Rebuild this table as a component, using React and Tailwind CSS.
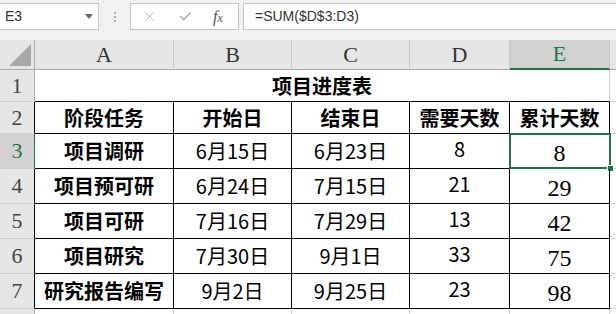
import { X, Check } from 'lucide-react';

const cols = ['A', 'B', 'C', 'D', 'E'];

const rows = [
  { n: 3, task: '项目调研', start: '6月15日', end: '6月23日', days: '8', total: '8' },
  { n: 4, task: '项目预可研', start: '6月24日', end: '7月15日', days: '21', total: '29' },
  { n: 5, task: '项目可研', start: '7月16日', end: '7月29日', days: '13', total: '42' },
  { n: 6, task: '项目研究', start: '7月30日', end: '9月1日', days: '33', total: '75' },
  { n: 7, task: '研究报告编写', start: '9月2日', end: '9月25日', days: '23', total: '98' },
];

const cjk = "font-['Noto_Sans_CJK_SC','Microsoft_YaHei',sans-serif]";
const serif = "font-['Liberation_Serif','Times_New_Roman',serif]";

function RowHead({ n, active, edge = 'border-r-black' }) {
  return (
    <div
      className={`flex items-center justify-center border-b border-r border-b-[#d0d0d0] ${serif} text-[22px] leading-none ${
        active ? 'bg-[#d2d2d2] text-[#217346] border-r-[#217346]' : `bg-[#e6e6e6] text-[#444] ${edge}`
      }`}
    >
      {n}
    </div>
  );
}

function Cell({ children, className = '' }) {
  return (
    <div className={`flex items-center justify-center border-b border-r border-black ${className}`}>
      {children}
    </div>
  );
}

export default function App() {
  return (
    <div className="w-[616px] h-[314px] overflow-hidden bg-[#f1f1f1] text-black">
      {/* formula bar */}
      <div className="flex items-start h-[40px] pt-[3px] font-['Liberation_Sans','Segoe_UI',sans-serif] text-[14px] text-[#333]">
        <div className="w-[99px] h-[27px] bg-white border border-[#c6c6c6] border-l-0 flex items-center justify-between pl-[5px] pr-[5px]">
          <span>E3</span>
          <span className="w-0 h-0 border-l-[4px] border-r-[4px] border-t-[5px] border-l-transparent border-r-transparent border-t-[#666]" />
        </div>
        <div className="w-[31px] h-[27px] flex flex-col items-center justify-center gap-[2px]">
          <span className="w-[2px] h-[2px] bg-[#aaa]" />
          <span className="w-[2px] h-[2px] bg-[#aaa]" />
          <span className="w-[2px] h-[2px] bg-[#aaa]" />
        </div>
        <div className="w-[109px] h-[27px] bg-white border border-[#c6c6c6] flex items-center">
          <X className="ml-[11px] w-[15px] h-[15px] text-[#b3b3b3]" strokeWidth={1.5} />
          <Check className="ml-[21px] w-[15px] h-[15px] text-[#b3b3b3]" strokeWidth={2.5} />
          <span className={`ml-[20px] ${serif} italic text-[16px] text-[#555]`}>
            f<span className="text-[12px]">x</span>
          </span>
        </div>
        <div className="ml-[4px] flex-1 h-[27px] bg-white border border-[#c6c6c6] border-r-0 flex items-center pl-[11px]">
          =SUM($D$3:D3)
        </div>
      </div>

      {/* sheet */}
      <div
        className={`grid grid-cols-[35px_139px_118px_118px_100px_100px_1fr] grid-rows-[30px_32px_32px_35px_35px_35px_35px_35px_1fr] h-[274px] bg-white ${cjk} text-[20px]`}
      >
        {/* select-all corner with its grey triangle */}
        <div className="relative bg-[#e6e6e6] border-r border-b border-[#ababab]">
          <svg className="absolute right-[3px] bottom-[3px]" width="22" height="22" viewBox="0 0 22 22">
            <polygon points="22,0 22,22 0,22" fill="#a8a8a8" />
          </svg>
        </div>
        {cols.map((c) => (
          <div
            key={c}
            className={`flex items-center justify-center ${serif} text-[22px] leading-none border-r ${
              c === 'E'
                ? 'bg-[#d2d2d2] text-[#217346] border-r-[#c6c6c6] border-b-2 border-b-[#217346]'
                : 'bg-[#e6e6e6] text-[#333] border-r-[#c6c6c6] border-b border-b-[#ababab]'
            }`}
          >
            {c}
          </div>
        ))}
        <div className="bg-[#e6e6e6] border-b border-[#ababab]" />

        {/* row 1: title */}
        <RowHead n={1} edge="border-r-[#ababab]" />
        <div className="col-span-5 flex items-center justify-center font-bold border-b border-b-black border-r border-r-[#d4d4d4]">
          项目进度表
        </div>
        <div className="border-b border-[#d4d4d4]" />

        {/* row 2: headings */}
        <RowHead n={2} />
        {['阶段任务', '开始日', '结束日', '需要天数', '累计天数'].map((h) => (
          <Cell key={h} className="font-bold">
            {h}
          </Cell>
        ))}
        <div className="border-b border-[#d4d4d4]" />

        {rows.map((r) => (
          <div key={r.n} className="contents">
            <RowHead n={r.n} active={r.n === 3} />
            <Cell className="font-bold">{r.task}</Cell>
            <Cell>{r.start}</Cell>
            <Cell>{r.end}</Cell>
            <Cell className="pb-[5px]">{r.days}</Cell>
            <Cell className={`relative ${serif} text-[24px] pt-[3px]`}>
              {r.total}
              {r.n === 3 && (
                <>
                  <span className="absolute -left-[1px] -top-[1px] -right-[2px] -bottom-[1px] border-2 border-[#217346]" />
                  <span className="absolute -right-[5px] -bottom-[4px] w-[7px] h-[7px] bg-[#217346] border border-white" />
                </>
              )}
            </Cell>
            <div className="border-b border-[#d4d4d4]" />
          </div>
        ))}

        {/* row 8, cut off at the bottom */}
        <div className="bg-[#e6e6e6] border-r border-[#ababab]" />
        {cols.map((c) => (
          <div key={c} className="border-r border-[#d4d4d4]" />
        ))}
        <div />
      </div>
    </div>
  );
}
